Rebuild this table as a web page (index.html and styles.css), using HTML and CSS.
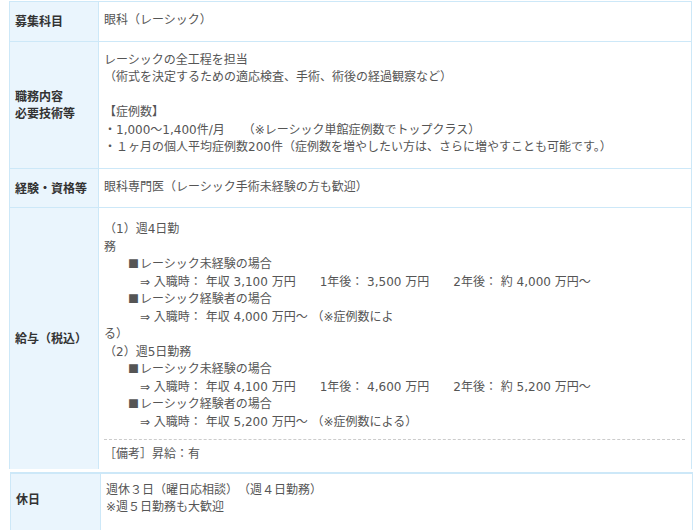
FILE: index.html
```html
<!DOCTYPE html>
<html lang="ja">
<head>
<meta charset="utf-8">
<link rel="stylesheet" href="styles.css">
</head>
<body>
<div class="page">
  <table class="info">
    <tr>
      <th>募集科目</th>
      <td>眼科（レーシック）</td>
    </tr>
    <tr>
      <th>職務内容<br>必要技術等</th>
      <td>レーシックの全工程を担当<br>（術式を決定するための適応検査、手術、術後の経過観察など）<br><br>【症例数】<br>・1,000～1,400件/月　　（※レーシック単館症例数でトップクラス）<br>・１ヶ月の個人平均症例数200件（症例数を増やしたい方は、さらに増やすことも可能です。）</td>
    </tr>
    <tr>
      <th>経験・資格等</th>
      <td>眼科専門医（レーシック手術未経験の方も歓迎）</td>
    </tr>
    <tr>
      <th>給与（税込）</th>
      <td class="salary">
        <div class="salary-body">（1）週4日勤<br>務<br>　　<span class="mark">■</span>レーシック未経験の場合<br>　　　⇒ 入職時： 年収 3,100 万円　　1年後： 3,500 万円　　2年後： 約 4,000 万円～<br>　　<span class="mark">■</span>レーシック経験者の場合<br>　　　⇒ 入職時： 年収 4,000 万円～ （※症例数によ<br>る）<br>（2）週5日勤務<br>　　<span class="mark">■</span>レーシック未経験の場合<br>　　　⇒ 入職時： 年収 4,100 万円　　1年後： 4,600 万円　　2年後： 約 5,200 万円～<br>　　<span class="mark">■</span>レーシック経験者の場合<br>　　　⇒ 入職時： 年収 5,200 万円～ （※症例数による）</div>
        <div class="note">［備考］昇給：有</div>
      </td>
    </tr>
  </table>
  <table class="info info-second">
    <tr>
      <th>休日</th>
      <td>週休３日（曜日応相談）　（週４日勤務）<br>※週５日勤務も大歓迎</td>
    </tr>
  </table>
</div>
</body>
</html>
```

FILE: styles.css
```css
html, body {
  margin: 0;
  padding: 0;
  background: #ffffff;
}

body {
  font-family: "DejaVu Sans", "Noto Sans CJK JP", sans-serif;
  font-size: 12px;
  line-height: 17.5px;
  color: #555555;
  overflow: hidden;
}

.page {
  padding: 1px 0 0 9px;
}

.info {
  width: 683px;
  box-sizing: border-box;
  table-layout: fixed;
  border-collapse: separate;
  border-spacing: 0;
  border-left: 1px solid #cde8f8;
  border-top: 1px solid #cde8f8;
}

.info th,
.info td {
  border-right: 1px solid #cde8f8;
  border-bottom: 1px solid #cde8f8;
  padding: 10px 6px 11px 5px;
  vertical-align: middle;
  text-align: left;
  font-weight: normal;
}

.info th {
  width: 89px;
  box-sizing: border-box;
  background: #eaf5fd;
  color: #333333;
  font-weight: bold;
  font-family: "Noto Sans CJK JP", sans-serif;
}

.info tr:last-child th,
.info tr:last-child td {
  border-bottom: none;
}

.info td.salary {
  padding: 10px 6px 5px 5px;
}

.salary-body {
  padding: 3px 0 8px;
  border-bottom: 1px dashed #cccccc;
  margin-bottom: 6px;
}

.mark {
  font-family: "Noto Sans CJK JP", sans-serif;
  font-size: 11px;
  line-height: 8px;
  color: #555555;
  margin-right: 1px;
}

.info-second {
  margin-left: 1px;
  margin-top: 3px;
  border-top: 2px solid #cde8f8;
}

.info-second th {
  width: 90px;
}

.info-second th,
.info-second td {
  padding: 8px 6px 14px 5px;
}
```
